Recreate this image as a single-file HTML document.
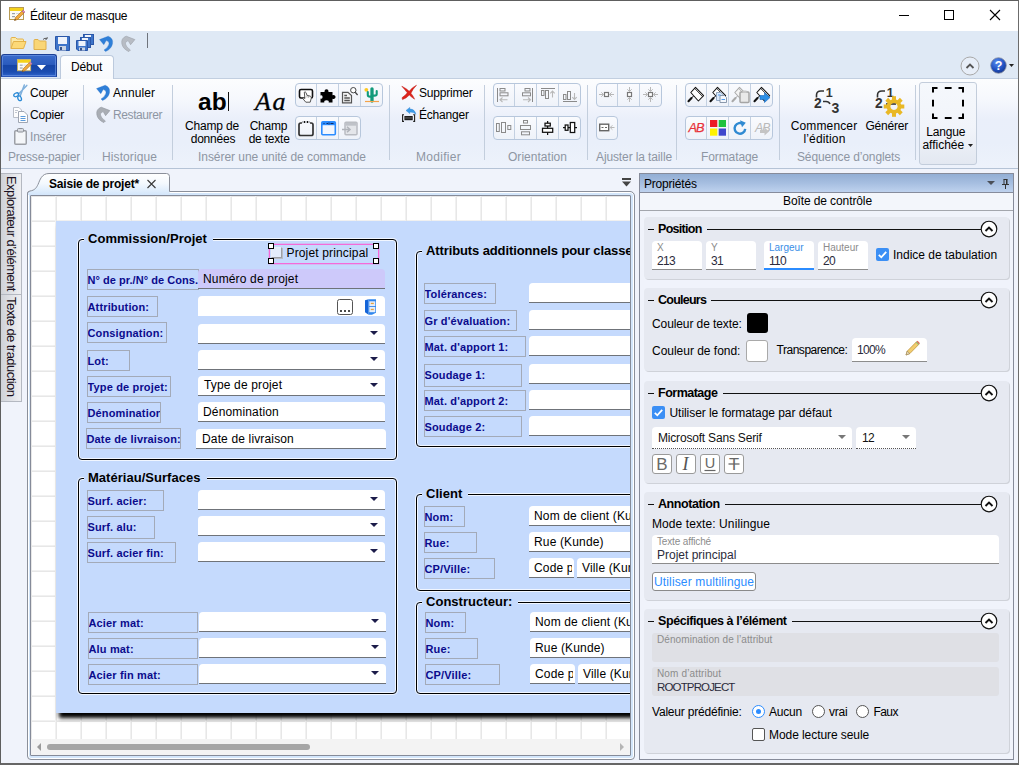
<!DOCTYPE html>
<html lang="fr">
<head>
<meta charset="utf-8">
<title>Éditeur de masque</title>
<style>
*{box-sizing:border-box;margin:0;padding:0}
html,body{width:1019px;height:765px;overflow:hidden;background:#fff}
body{font-family:"Liberation Sans",sans-serif;font-size:12px;color:#000;position:relative}
.a{position:absolute}
.t{position:absolute;white-space:nowrap;line-height:14px;font-size:12px;letter-spacing:-0.2px}
.g{color:#8e96a3}
svg{position:absolute;overflow:visible}
/* window */
#win{position:absolute;left:0;top:0;width:1019px;height:765px;background:#fff;overflow:hidden}
#frame{position:absolute;left:0;top:0;width:1019px;height:765px;border:1px solid #5e5e5e;border-right-color:#6c6c6c;border-bottom:2px solid #666;pointer-events:none}
#qat{left:1px;top:31px;width:1017px;height:24px;background:#dfe9f5}
#tabrow{left:1px;top:55px;width:1017px;height:24px;background:#dfe9f5;border-bottom:1px solid #c2cfe0}
#ribbon{left:1px;top:79px;width:1017px;height:90px;background:linear-gradient(#fcfdfe 0,#f6f8fd 22%,#eaeffa 45%,#e9effa 72%,#edf2fb 100%);border-bottom:1px solid #b5c3d6}
#main{left:1px;top:169px;width:1017px;height:595px;background:#f0f3fb}
.sep{position:absolute;top:6px;width:1px;height:75px;background:#c3cedd}
.grp{position:absolute;font-size:12px;line-height:14px;color:#9aa1ad;white-space:nowrap;top:72px}
/* ribbon small button groups */
.bg{position:absolute;height:24px;border:1px solid #bccadd;border-radius:3px;background:linear-gradient(#fbfcfe,#eef2f8);display:flex}
.bg i{display:block;width:22px;height:22px;border-right:1px solid #c6d2e2;position:relative;flex:none}
.bg i:last-child{border-right:0}

/* main area */
#side1,#side2{position:absolute;left:1px;width:21px;background:linear-gradient(90deg,#cfd2d8,#e9eaee 80%,#eeeff2);border:1px solid #b4b8c1;border-left:0}
.vt{position:absolute;white-space:nowrap;font-size:13px;line-height:14px;transform-origin:0 0;transform:rotate(90deg);letter-spacing:-0.55px;color:#1a1020}
#docframe{position:absolute;left:27px;top:191px;width:608px;height:569px;border:1px solid #8a8f9a;border-radius:3px 5px 4px 4px;background:#d3e6fb;box-shadow:inset 0 0 0 1px #fff}
#canvas{position:absolute;left:31px;top:196px;width:599px;height:543px;background-color:#fff;overflow:hidden;
 background-image:linear-gradient(90deg,#f1f1f1 1px,#e7e7e7 1px,#e7e7e7 2px,transparent 2px),linear-gradient(#f1f1f1 1px,#e7e7e7 1px,#e7e7e7 2px,transparent 2px);background-size:25px 25px;background-position:-1px -1px}
#form{position:absolute;left:25px;top:25px;width:900px;height:492px;background:#c5dafd;box-shadow:3px 5px 4px 0 #000}
.gb{position:absolute;border:1px solid #000;border-radius:4px;box-shadow:0 0 0 1px rgba(255,255,255,.75),inset 0 0 0 1px rgba(255,255,255,.75)}
.gt{position:absolute;font-weight:bold;font-size:13px;line-height:15px;white-space:nowrap;background:#c5dafd;padding:0 6px 0 4px;letter-spacing:.03px}
.lb{position:absolute;border:1px solid #a3aab8;font-weight:bold;font-size:11px;line-height:13px;color:#0b0b8c;white-space:nowrap;padding:5px 0 0 0;overflow:hidden;letter-spacing:.15px;text-indent:-.500px}
.fd{position:absolute;background:#fff;border-radius:4px 4px 0 0;border-bottom:1px solid #6f7379;font-size:12px;line-height:14px;white-space:nowrap;overflow:hidden;letter-spacing:.15px}
.fd.nb{border-bottom:0}
.fd.lav{background:#cdc9fa}
.dd{position:absolute;width:0;height:0;border-left:4px solid transparent;border-right:4px solid transparent;border-top:4px solid #1c1c4a}

/* properties panel */
#pp{position:absolute;left:639px;top:173px;width:375px;height:587px;border:1px solid #868b9a;background:#f0f3fb}
#pph{position:absolute;left:640px;top:174px;width:373px;height:19px;background:linear-gradient(#92aed4 0,#a6bee0 50%,#bed2ee 100%);border-bottom:1px solid #868c9c}
#pps{position:absolute;left:640px;top:193px;width:373px;height:18px;background:#f3f6fb;border-bottom:1px solid #a3a6ad}
.card{position:absolute;left:644px;width:365px;background:#e6e9f1;border-radius:4px;box-shadow:1px 1px 0 #cfd2d9}
.ct{position:absolute;left:658px;font-weight:bold;font-size:12.500px;line-height:14px;letter-spacing:-0.5px;white-space:nowrap}
.cl{position:absolute;height:1px;background:#111}
.pf{position:absolute;background:#fff;border-radius:4px 4px 0 0;border-bottom:1px solid #8c8c8c}
.pf.dis{background:#dfe0e5;border-bottom:0;border-radius:3px}
.sl{position:absolute;font-size:10px;line-height:12px;color:#8c8c8c;white-space:nowrap;letter-spacing:0}
.pv{position:absolute;font-size:12px;line-height:14px;color:#2b2b3b;white-space:nowrap;letter-spacing:-0.7px}
.cb{position:absolute;width:13px;height:13px;border-radius:2px;background:#3b8ff5}
.rd{position:absolute;width:13px;height:13px;border-radius:50%;border:1px solid #555;background:#fff}
.fb{position:absolute;top:454px;width:20px;height:20px;border:1px solid #9a9a9a;border-radius:3px;background:#fff}
</style>
</head>
<body>
<div id="win">
<!-- TITLE BAR -->
<div class="a" id="title" style="left:1px;top:1px;width:1017px;height:30px;background:#fff">
  <!-- app icon -->
  <svg style="left:8px;top:6px" width="17" height="16" viewBox="0 0 17 16">
    <rect x="0.5" y="0.5" width="14" height="12" fill="#fbfaf3" stroke="#b79b55"/>
    <rect x="1" y="1" width="13" height="3" fill="#f5d21b"/>
    <rect x="3" y="6" width="3" height="1.2" fill="#9aa0a8"/><rect x="3" y="9" width="3" height="1.2" fill="#9aa0a8"/>
    <rect x="7" y="6" width="5" height="1" fill="#d4d6da"/>
    <path d="M5.5 13.5 L6.5 10.5 L13 4 L15 6 L8.5 12.5 Z" fill="#f0a93c" stroke="#a8661a" stroke-width=".6"/>
    <path d="M13 4 L14 3 L16 5 L15 6Z" fill="#e59ac0" stroke="#a05080" stroke-width=".5"/>
    <path d="M5.5 13.5 L6 12 L7 13Z" fill="#333"/>
  </svg>
  <div class="t" id="ttl" style="left:29px;top:8px">Éditeur de masque</div>
  <!-- window controls -->
  <div class="a" style="left:898px;top:14px;width:10px;height:1px;background:#000"></div>
  <div class="a" style="left:943px;top:9px;width:10px;height:10px;border:1px solid #000"></div>
  <svg style="left:989px;top:9px" width="10" height="10" viewBox="0 0 10 10"><path d="M0 0L10 10M10 0L0 10" stroke="#000" stroke-width="1.1" fill="none"/></svg>
</div>
<!-- QAT -->
<div class="a" id="qat">
  <!-- open folder -->
  <svg style="left:9px;top:5px" width="17" height="14" viewBox="0 0 17 14">
    <path d="M1 12.5V2.5Q1 1.5 2 1.5H5.5L7 3H12.5Q13.5 3 13.5 4V5" fill="#fbe9a8" stroke="#e3b24a"/>
    <path d="M1 12.5L3.5 5.5H16L13.5 12.5Z" fill="#fcd978" stroke="#e3b24a"/>
  </svg>
  <!-- folder up -->
  <svg style="left:32px;top:5px" width="16" height="15" viewBox="0 0 16 15">
    <path d="M1 13.5V4.5Q1 3.5 2 3.5H5L6.5 5H12.5Q13 5 13 5.5V13.5Z" fill="#f9d676" stroke="#e0b04a"/>
    <path d="M10 3.5Q12 1 14 3M14 3L14.2 1M14 3L12 3" stroke="#555" stroke-width=".9" fill="none"/>
  </svg>
  <!-- save -->
  <svg style="left:54px;top:5px" width="15" height="15" viewBox="0 0 15 15">
    <path d="M.5 .5H14.5V14.5H2L.5 13Z" fill="#3d74c9" stroke="#2a57a8"/>
    <rect x="3" y="1" width="9" height="7" fill="#eef3fb"/>
    <rect x="4" y="10" width="7" height="4.5" fill="#c9d3e3"/><rect x="5" y="11" width="2" height="3" fill="#33528a"/>
  </svg>
  <!-- save all -->
  <svg style="left:75px;top:3px" width="18" height="17" viewBox="0 0 18 17">
    <rect x="7.5" y=".5" width="10" height="10" fill="#3d74c9" stroke="#2a57a8"/><rect x="9" y="1" width="6" height="4" fill="#eef3fb"/>
    <rect x="4.500" y="3.500" width="10" height="10" fill="#3d74c9" stroke="#2a57a8"/><rect x="6" y="4" width="6" height="4" fill="#eef3fb"/>
    <path d="M.5 6.500H11.500V16.500H2L.5 15Z" fill="#3d74c9" stroke="#2a57a8"/><rect x="2.500" y="7" width="7" height="5" fill="#eef3fb"/>
    <rect x="3" y="13.500" width="6" height="3" fill="#c9d3e3"/><rect x="4" y="14" width="2" height="2.500" fill="#33528a"/>
  </svg>
  <!-- undo -->
  <svg style="left:98px;top:4px" width="15" height="16" viewBox="0 0 15 16">
    <path d="M.500 4.600L9.200 1.200Q14.600 3.200 13.500 8.800Q12.600 13.800 6.600 16.600L5 15Q9.400 12.200 10 8.900Q10.400 6.400 7.200 5.600L4.800 9.700Z" fill="#2e7fd8" stroke="#1f66bd" stroke-width=".3"/>
  </svg>
  <!-- redo (disabled) -->
  <svg style="left:120px;top:4px" width="15" height="16" viewBox="0 0 15 16">
    <path d="M13.9 4.6L5.2 1.2Q-0.2 3.2 0.9 8.8Q1.8 13.8 7.8 16.6L9.4 15Q5 12.2 4.4 8.9Q4 6.4 7.2 5.6L9.6 9.7Z" fill="#b7bcc4" stroke="#9a9fa8" stroke-width=".6"/>
  </svg>
  <div class="a" style="left:146px;top:2px;width:1px;height:15px;background:#6f747c"></div>
</div>
<!-- TAB ROW -->
<div class="a" id="tabrow">
  <div class="a" style="left:0;top:-1px;width:56px;height:23px;border:1px solid #1b3f95;border-bottom-color:#2a56b8;border-radius:3px 3px 0 0;background:linear-gradient(#3a6bcb 0,#2a5bbd 45%,#1645a6 50%,#1a4cb0 80%,#2d63c9 100%);box-shadow:inset 0 0 0 1px rgba(120,160,235,.55)"></div>
  <svg style="left:16px;top:4px" width="16" height="15" viewBox="0 0 17 16">
    <rect x="0.5" y="0.5" width="14" height="12" fill="#fbfaf3" stroke="#c9b368"/>
    <rect x="1" y="1" width="13" height="3" fill="#f5d21b"/>
    <rect x="3" y="6" width="3" height="1.200" fill="#9aa0a8"/><rect x="3" y="9" width="3" height="1.200" fill="#9aa0a8"/>
    <rect x="7" y="6" width="5" height="1" fill="#d4d6da"/>
    <path d="M5.500 13.500 L6.500 10.500 L13 4 L15 6 L8.500 12.500 Z" fill="#f0a93c" stroke="#a8661a" stroke-width=".6"/>
    <path d="M13 4 L14 3 L16 5 L15 6Z" fill="#e59ac0" stroke="#a05080" stroke-width=".5"/>
    <path d="M5.500 13.500 L6 12 L7 13Z" fill="#333"/>
  </svg>
  <svg style="left:36px;top:10px" width="9" height="5" viewBox="0 0 9 5"><path d="M0 0H9L4.500 5Z" fill="#fff"/></svg>
  <div class="a" style="left:59px;top:0;width:54px;height:24px;border:1px solid #bccadd;border-bottom:0;border-radius:4px 4px 0 0;background:linear-gradient(#fdfeff,#f7f9fc)"></div>
  <div class="t" id="debut" style="left:70px;top:5px">Début</div>
  <!-- collapse circle -->
  <svg style="left:958.500px;top:1px" width="20" height="20" viewBox="0 0 20 20"><circle cx="10" cy="10" r="9" fill="#e7eef8" stroke="#a9a9a9" stroke-width="1"/><path d="M6.500 12L10 8.500L13.500 12" stroke="#555" stroke-width="1.800" fill="none"/></svg>
  <!-- help -->
  <svg style="left:988.500px;top:2px" width="17" height="17" viewBox="0 0 17 17">
    <defs><radialGradient id="hg" cx=".4" cy=".3" r=".8"><stop offset="0" stop-color="#5a8ff0"/><stop offset=".6" stop-color="#1f4fc0"/><stop offset="1" stop-color="#12307f"/></radialGradient></defs>
    <circle cx="8.500" cy="8.500" r="7.800" fill="url(#hg)" stroke="#8a8fa0" stroke-width=".8"/>
    <text x="8.500" y="13" text-anchor="middle" font-family="Liberation Sans,sans-serif" font-weight="bold" font-size="12.500" fill="#fff">?</text>
  </svg>
  <svg style="left:1008px;top:9px" width="5" height="3" viewBox="0 0 5 3"><path d="M0 0H5L2.500 3Z" fill="#222"/></svg>
</div>
<!-- RIBBON -->
<div class="a" id="ribbon">
<svg style="left:11px;top:5px" width="16" height="17" viewBox="0 0 16 17">
 <path d="M14.800 1.400L6.300 10.200M12.300 1L8.200 12" stroke="#7fb0dc" stroke-width="1.500" fill="none" stroke-linecap="round"/>
 <ellipse cx="4.200" cy="10.800" rx="2.600" ry="1.700" transform="rotate(-28 4.200 10.800)" fill="none" stroke="#2b8ad6" stroke-width="1.300"/>
 <ellipse cx="7.600" cy="14.300" rx="1.700" ry="2.500" transform="rotate(-22 7.600 14.300)" fill="none" stroke="#2b8ad6" stroke-width="1.300"/>
</svg>
<div class="t " id="r_couper" style="left:29px;top:7px;">Couper</div>
<svg style="left:12px;top:28px" width="15" height="16" viewBox="0 0 15 16">
 <path d="M.500 .500H6L8.500 3V10.500H.500Z" fill="#fdfdfe" stroke="#b9bec8"/>
 <path d="M5.500 4.500H11L14.500 8V15.500H5.500Z" fill="#fdfdfe" stroke="#9fa6b3"/>
 <path d="M7.500 9.500H12.500M7.500 11.500H12.500M7.500 13.500H12.500" stroke="#5b9bdc" stroke-width="1"/>
 <path d="M2 3.500H5M2 5.500H4" stroke="#c2c7d0" stroke-width="1"/>
</svg>
<div class="t " id="r_copier" style="left:29px;top:29px;">Copier</div>
<svg style="left:13px;top:49px" width="13" height="17" viewBox="0 0 13 17">
 <rect x=".750" y="2.750" width="11.500" height="13.500" rx="1" fill="#f4f6f9" stroke="#9c9fa6" stroke-width="1.500"/>
 <rect x="3.500" y=".500" width="6" height="3.500" rx="1" fill="#d9dce2" stroke="#8c9098"/>
</svg>
<div class="t g" id="r_inserer" style="left:29px;top:51px;">Insérer</div>
<div class="t g" id="g_presse" style="left:7px;top:71px;">Presse-papier</div>
<div class="sep" style="left:82px"></div>
<svg style="left:95px;top:5px" width="15" height="17" viewBox="0 0 15 17">
 <path d="M.500 4.600L9.200 1.200Q14.600 3.200 13.500 8.800Q12.600 13.800 6.600 16.600L5 15Q9.400 12.200 10 8.900Q10.400 6.400 7.200 5.600L4.800 9.700Z" fill="#2e7fd8" stroke="#1f66bd" stroke-width=".3"/>
</svg>
<div class="t " id="r_annuler" style="letter-spacing:0.1px;left:112px;top:7px;">Annuler</div>
<svg style="left:95px;top:27px" width="15" height="17" viewBox="0 0 15 17">
 <path d="M13.9 4.6L5.2 1.2Q-0.2 3.2 0.9 8.8Q1.8 13.8 7.8 16.6L9.4 15Q5 12.2 4.4 8.9Q4 6.4 7.2 5.6L9.6 9.7Z" fill="#a9adb4" stroke="#8f949c" stroke-width=".6"/>
</svg>
<div class="t g" id="r_restaurer" style="letter-spacing:-0.4px;left:112px;top:29px;">Restaurer</div>
<div class="t g" id="g_hist" style="letter-spacing:0.1px;left:101px;top:71px;">Historique</div>
<div class="sep" style="left:171px"></div>
<div class="t" id="r_abl" style="left:197px;top:10.700px;font-size:24.500px;line-height:23px;font-weight:bold;letter-spacing:0">ab</div>
<div class="a" style="left:227px;top:13px;width:1px;height:18.500px;background:#111"></div>
<div class="t " id="r_champde" style="left:151.0px;width:120px;text-align:center;top:40px;">Champ de</div>
<div class="t " id="r_donnees" style="left:152.0px;width:120px;text-align:center;top:53px;">données</div>
<div class="t" id="r_aa" style="left:254px;top:11px;font-family:'Liberation Serif',serif;font-style:italic;font-size:26px;line-height:24px;letter-spacing:1.500px;-webkit-text-stroke:.35px #111">Aa</div>
<div class="t " id="r_champ" style="left:207.5px;width:120px;text-align:center;top:40px;">Champ</div>
<div class="t " id="r_detexte" style="left:208.2px;width:120px;text-align:center;top:53px;">de texte</div>
<div class="t g" id="g_inserer" style="letter-spacing:-0.05px;left:197px;top:71px;">Insérer une unité de commande</div>
<div class="sep" style="left:388px"></div>
<svg style="left:400px;top:6px" width="16" height="15" viewBox="0 0 16 15">
 <path d="M.800 1.200Q5.500 3.500 8.200 6.300Q11.500 2 15.500 .200Q11.500 4.300 9.900 8.200Q12.300 11 13.600 14.200Q10.300 12 8.300 10Q5.800 13 1.500 14.600Q1 13.500 1.200 12.500Q4.500 10.500 6.300 7.800Q3.800 4.500 .800 1.200Z" fill="#dc241c" stroke="#c21810" stroke-width=".5"/>
</svg>
<div class="t " id="r_suppr" style="left:418px;top:7px;">Supprimer</div>
<svg style="left:401px;top:28px" width="15" height="16" viewBox="0 0 15 16">
 <path d="M4 3.500L7.800 .400V2.100Q12.800 2 13.900 7.300Q11.500 4.900 7.800 5V6.600Z" fill="#3b9be8" stroke="#2b7fd0" stroke-width=".4"/>
 <rect x="2.400" y="9" width="8.300" height="4.200" fill="#1e1e1e"/><rect x="3.200" y="10.300" width="6.700" height="1.300" fill="#555"/>
 <path d="M2 7.800H.600V14.400H2M11.200 7.800H12.600V14.400H11.200" stroke="#1e1e1e" stroke-width="1.100" fill="none"/>
</svg>
<div class="t " id="r_echanger" style="left:418px;top:29px;">Échanger</div>
<div class="t g" id="g_modifier" style="letter-spacing:0.29px;left:415px;top:71px;">Modifier</div>
<div class="sep" style="left:483px"></div>
<div class="t g" id="g_orient" style="letter-spacing:0.03px;left:507px;top:71px;">Orientation</div>
<div class="sep" style="left:586px"></div>
<div class="t g" id="g_ajuster" style="letter-spacing:-0.12px;left:595px;top:71px;">Ajuster la taille</div>
<div class="sep" style="left:675px"></div>
<div class="t g" id="g_format" style="letter-spacing:-0.1px;left:700px;top:71px;">Formatage</div>
<div class="sep" style="left:778px"></div>
<svg style="left:812px;top:8px" width="28" height="28" viewBox="0 0 28 28">
 <text x="12.700" y="9.700" font-family="Liberation Sans,sans-serif" font-weight="bold" font-size="12.500" fill="#333">1</text>
 <text x="1" y="20.700" font-family="Liberation Sans,sans-serif" font-weight="bold" font-size="13.800" fill="#333">2</text>
 <text x="18.500" y="25.900" font-family="Liberation Sans,sans-serif" font-weight="bold" font-size="14" fill="#333">3</text>
 <path d="M3.500 10.500V8Q3.500 4 8 4H11" stroke="#333" stroke-width="1.600" fill="none"/>
 <path d="M10 14.500H13Q16 14.500 17 17" stroke="#333" stroke-width="1.600" fill="none"/>
</svg>
<div class="t " id="r_commencer" style="letter-spacing:0.13px;left:763.0px;width:120px;text-align:center;top:39.5px;">Commencer</div>
<div class="t " id="r_ledition" style="letter-spacing:0.15px;left:763.5px;width:120px;text-align:center;top:52.5px;">l’édition</div>
<svg style="left:873px;top:8px" width="32" height="32" viewBox="0 0 32 32">
 <text x="12.700" y="9.700" font-family="Liberation Sans,sans-serif" font-weight="bold" font-size="12.500" fill="#333">1</text>
 <text x="1" y="20.700" font-family="Liberation Sans,sans-serif" font-weight="bold" font-size="13.800" fill="#333">2</text>
 <path d="M3.500 10.500V8Q3.500 4 8 4H11" stroke="#333" stroke-width="1.600" fill="none"/>
 <path d="M12 17H22" stroke="#333" stroke-width="1.600"/>
 <g transform="translate(20 19.500)" fill="#e9b825">
  <path d="M0 -7.300A7.300 7.300 0 1 0 .01 -7.300ZM0 -3.600A3.600 3.600 0 1 1 -.01 -3.600Z" fill-rule="evenodd"/>
  <rect x="-2" y="-10.300" width="4" height="4"/>
  <rect x="-2" y="-10.300" width="4" height="4" transform="rotate(45)"/><rect x="-2" y="-10.300" width="4" height="4" transform="rotate(90)"/>
  <rect x="-2" y="-10.300" width="4" height="4" transform="rotate(135)"/><rect x="-2" y="-10.300" width="4" height="4" transform="rotate(180)"/>
  <rect x="-2" y="-10.300" width="4" height="4" transform="rotate(225)"/><rect x="-2" y="-10.300" width="4" height="4" transform="rotate(270)"/>
  <rect x="-2" y="-10.300" width="4" height="4" transform="rotate(315)"/>
 </g>
</svg>
<div class="t " id="r_generer" style="left:825.8px;width:120px;text-align:center;top:39.5px;">Générer</div>
<div class="t g" id="g_seq" style="letter-spacing:-0.13px;left:796px;top:71px;">Séquence d’onglets</div>
<div class="sep" style="left:914px"></div>
<div class="a" style="left:918px;top:3px;width:58px;height:83px;border:1px solid #c3cddb;border-radius:3px;background:linear-gradient(#f5f8fc 0,#f1f4fa 55%,#e3e8f1 100%)"></div>
<svg style="left:931px;top:8px" width="32" height="32" viewBox="0 0 32 32">
 <path d="M1 5.500V1H5.500M12.800 1H19.600M26.500 1H31V5.500M31 12.800V19.600M31 26.500V31H26.500M19.600 31H12.800M5.500 31H1V26.500M1 19.600V12.800" stroke="#000" stroke-width="2" fill="none"/>
</svg>
<div class="t " id="r_langue" style="left:884.7px;width:120px;text-align:center;top:45.5px;">Langue</div>
<div class="t " id="r_affichee" style="letter-spacing:0px;left:882.3px;width:120px;text-align:center;top:58.5px;">affichée</div>
<svg style="left:967px;top:65px" width="5" height="3" viewBox="0 0 5 3"><path d="M0 0H5L2.500 3Z" fill="#222"/></svg>
<svg width="0" height="0" style="left:0;top:0"><defs><linearGradient id="bgg" x1="0" y1="0" x2="0" y2="1"><stop offset="0" stop-color="#fafbfe"/><stop offset="1" stop-color="#eef2f9"/></linearGradient></defs></svg>
<svg style="left:294px;top:4px" width="88" height="24" viewBox="0 0 88 24"><rect x=".500" y=".500" width="87" height="23" rx="3.500" fill="url(#bgg)" stroke="#b7c7dc"/><path d="M21.5 1V23" stroke="#c3d0e1"/><path d="M43.5 1V23" stroke="#c3d0e1"/><path d="M65.5 1V23" stroke="#c3d0e1"/>
<rect x="4.500" y="6.500" width="13" height="8.500" rx="1.500" fill="#fff" stroke="#111" stroke-width="1.600"/>
<path d="M9.300 9.200Q10.300 8.400 11 9.600L12 12.300L15.300 13.200Q16.700 13.800 16.200 15.500L15.200 19.200H10.800L8 15.800Q7.600 14.600 8.800 14.700L9.900 15.500Z" fill="#fff" stroke="#444" stroke-width=".9"/><path d="M12 12.300V14.500M13.600 12.900V14.800" stroke="#777" stroke-width=".6"/>
<path transform="translate(-1 0)" d="M30.500 8.200A2 2 0 1 1 34.500 8.200L34.400 9H38.500V12.300A2 2 0 1 1 38.500 15.700V19.500H34.700Q35.300 17.300 32.500 17.300Q29.800 17.300 30.300 19.500H26.500V15.500Q28.600 16.200 28.600 14Q28.600 11.800 26.500 12.500V9H30.600Z" fill="#000"/>
<path d="M47.500 9.300H53L56.500 12.500V19.800H47.500Z" fill="#f2f2f2" stroke="#555" stroke-width="1.200"/>
<path d="M49.300 12.500H52M49.300 15H54.800M49.300 17.500H54.800" stroke="#555" stroke-width="1.300"/>
<circle cx="58.300" cy="7.200" r="2.700" fill="#fff" stroke="#444" stroke-width="1"/><path d="M60.200 9.300L62.600 12" stroke="#444" stroke-width="1.300"/>
<circle cx="71.300" cy="6.800" r="1.900" fill="#fdc822"/>
<path d="M77 5.800V18" stroke="#119a7a" stroke-width="3.300" fill="none" stroke-linecap="round"/><path d="M72.800 9V12Q72.800 13.600 75 13.600H77M81.700 8V11Q81.700 12.600 79.500 12.600H77" stroke="#119a7a" stroke-width="2.100" fill="none" stroke-linecap="round"/>
<path d="M70 18.500H84" stroke="#f3a34a" stroke-width="1.200"/></svg>
<svg style="left:294px;top:37px" width="66" height="24" viewBox="0 0 66 24"><rect x=".500" y=".500" width="65" height="23" rx="3.500" fill="url(#bgg)" stroke="#b7c7dc"/><path d="M21.5 1V23" stroke="#c3d0e1"/><path d="M43.5 1V23" stroke="#c3d0e1"/>
<rect x="4" y="7" width="14" height="12.500" rx="1.800" fill="none" stroke="#333" stroke-width="1.700"/>
<rect x="7" y="5" width="8" height="3" fill="#f1f4fa"/><path d="M7.500 6H8.500M9.500 5V7M10.500 6H11.500M12.500 5V7M13.500 6H14.500" stroke="#111" stroke-width="1"/>
<rect x="26.800" y="5.800" width="13.500" height="13" rx="1" fill="#f2f6fd" stroke="#2b8cff" stroke-width="1.600"/>
<rect x="27" y="6" width="13" height="3.200" fill="#2b8cff"/><path d="M28.500 7.500H29.500M31.500 7.500H33M34 6.500V8.500M35.500 7.500H38.500" stroke="#0b2a66" stroke-width="1"/>
<rect x="50" y="6.200" width="12" height="12.500" rx="1" fill="#e4e6ea" stroke="#b9bcc2" stroke-width="1.500"/>
<rect x="50.500" y="6.700" width="11" height="3" fill="#bfc2c8"/>
<path d="M47 13.500H54.500M52 10.800L55 13.500L52 16.200" stroke="#b0b3b9" stroke-width="1.500" fill="none"/></svg>
<svg style="left:492px;top:4px" width="88" height="24" viewBox="0 0 88 24"><rect x=".500" y=".500" width="87" height="23" rx="3.500" fill="url(#bgg)" stroke="#b7c7dc"/><path d="M21.5 1V23" stroke="#c3d0e1"/><path d="M43.5 1V23" stroke="#c3d0e1"/><path d="M65.5 1V23" stroke="#c3d0e1"/>
<path d="M4.500 5V19" stroke="#8a8a8a" stroke-width="1"/>
<rect x="7" y="5.500" width="5" height="2.500" fill="none" stroke="#8a8a8a"/><rect x="7" y="9.800" width="8" height="3" fill="none" stroke="#8a8a8a"/>
<path d="M14.500 16.800H7M9.500 14.500L7 16.800L9.500 19" stroke="#b8b8b8" stroke-width="1.100" fill="none"/>
<path d="M39.500 5V19" stroke="#8a8a8a" stroke-width="1"/>
<rect x="32" y="5.500" width="5" height="2.500" fill="none" stroke="#8a8a8a"/><rect x="29.500" y="9.800" width="8" height="3" fill="none" stroke="#8a8a8a"/>
<path d="M30 16.800H37.500M35 14.500L37.500 16.800L35 19" stroke="#b8b8b8" stroke-width="1.100" fill="none"/>
<path d="M48 5.500H62" stroke="#8a8a8a" stroke-width="1"/>
<rect x="48.500" y="7.500" width="2.500" height="5" fill="none" stroke="#8a8a8a"/><rect x="52.500" y="7.500" width="3" height="8" fill="none" stroke="#8a8a8a"/>
<path d="M59.500 14.500V8M57.300 10.300L59.500 8L61.700 10.300" stroke="#b8b8b8" stroke-width="1.100" fill="none"/>
<path d="M70 18.500H84" stroke="#8a8a8a" stroke-width="1"/>
<rect x="70.500" y="11.500" width="2.500" height="5" fill="none" stroke="#8a8a8a"/><rect x="74.500" y="8.500" width="3" height="8" fill="none" stroke="#8a8a8a"/>
<path d="M81.500 10V16.500M79.300 14.200L81.500 16.500L83.700 14.200" stroke="#b8b8b8" stroke-width="1.100" fill="none"/></svg>
<svg style="left:492px;top:37px" width="88" height="24" viewBox="0 0 88 24"><rect x=".500" y=".500" width="87" height="23" rx="3.500" fill="url(#bgg)" stroke="#b7c7dc"/><path d="M21.5 1V23" stroke="#c3d0e1"/><path d="M43.5 1V23" stroke="#c3d0e1"/><path d="M65.5 1V23" stroke="#c3d0e1"/>
<rect x="3.500" y="7.500" width="2.800" height="8" fill="none" stroke="#8a8a8a"/><rect x="8.500" y="6.500" width="4" height="10" fill="none" stroke="#8a8a8a"/><rect x="14.800" y="9.500" width="3" height="4" fill="none" stroke="#8a8a8a"/>
<rect x="30.500" y="4.500" width="4" height="2.500" fill="none" stroke="#8a8a8a"/><rect x="27.500" y="9.500" width="10" height="4" fill="none" stroke="#8a8a8a"/><rect x="28.500" y="15.800" width="8" height="3" fill="none" stroke="#8a8a8a"/>
<path d="M54.600 5V19" stroke="#111" stroke-width="1.250"/>
<rect x="52" y="7.200" width="5.300" height="2.800" fill="#fff" stroke="#111" stroke-width="1.250"/><rect x="49.500" y="12.300" width="10.200" height="4" fill="#fff" stroke="#111" stroke-width="1.250"/>
<path d="M70 11.600H84" stroke="#111" stroke-width="1.250"/>
<rect x="72.200" y="9" width="2.800" height="5.300" fill="#fff" stroke="#111" stroke-width="1.250"/><rect x="77.300" y="6.500" width="4.400" height="10" fill="#fff" stroke="#111" stroke-width="1.250"/></svg>
<svg style="left:595px;top:4px" width="66" height="24" viewBox="0 0 66 24"><rect x=".500" y=".500" width="65" height="23" rx="3.500" fill="url(#bgg)" stroke="#b7c7dc"/><path d="M21.5 1V23" stroke="#c3d0e1"/><path d="M43.5 1V23" stroke="#c3d0e1"/><rect x="8.500" y="9.500" width="4" height="4" fill="#fff" stroke="#777" stroke-width="1.200"/><path d="M3 11.5L7.5 11.5M5.3 13.7L7.5 11.5L5.3 9.3" stroke="#b8b8b8" stroke-width="1" fill="none"/><path d="M18 11.5L13.5 11.5M15.7 9.3L13.5 11.5L15.7 13.7" stroke="#b8b8b8" stroke-width="1" fill="none"/><rect x="31.500" y="9.500" width="4" height="4" fill="#fff" stroke="#777" stroke-width="1.200"/><path d="M33.5 4L33.5 8.5M31.3 6.3L33.5 8.5L35.7 6.3" stroke="#b8b8b8" stroke-width="1" fill="none"/><path d="M33.5 19L33.5 14.5M35.7 16.7L33.5 14.5L31.3 16.7" stroke="#b8b8b8" stroke-width="1" fill="none"/><rect x="52.500" y="9.500" width="4" height="4" fill="#fff" stroke="#777" stroke-width="1.200"/><path d="M47 11.5L51.5 11.5M49.3 13.7L51.5 11.5L49.3 9.3" stroke="#b8b8b8" stroke-width="1" fill="none"/><path d="M62 11.5L57.5 11.5M59.7 9.3L57.5 11.5L59.7 13.7" stroke="#b8b8b8" stroke-width="1" fill="none"/><path d="M54.5 4L54.5 8.5M52.3 6.3L54.5 8.5L56.7 6.3" stroke="#b8b8b8" stroke-width="1" fill="none"/><path d="M54.5 19L54.5 14.5M56.7 16.7L54.5 14.5L52.3 16.7" stroke="#b8b8b8" stroke-width="1" fill="none"/></svg>
<svg style="left:595px;top:37px" width="22" height="24" viewBox="0 0 22 24"><rect x=".500" y=".500" width="21" height="23" rx="3.500" fill="url(#bgg)" stroke="#b7c7dc"/><rect x="3.700" y="8.200" width="9" height="6.500" fill="#fff" stroke="#666" stroke-width="1.400"/><path d="M5.500 11.500H7.500M9 11.500H11" stroke="#666" stroke-width="1.200"/><path d="M18.5 11.5L14.2 11.5M16.4 9.3L14.2 11.5L16.4 13.7" stroke="#b8b8b8" stroke-width="1" fill="none"/></svg>
<svg style="left:684px;top:4px" width="88" height="24" viewBox="0 0 88 24"><rect x=".500" y=".500" width="87" height="23" rx="3.500" fill="url(#bgg)" stroke="#b7c7dc"/><path d="M21.5 1V23" stroke="#c3d0e1"/><path d="M43.5 1V23" stroke="#c3d0e1"/><path d="M65.5 1V23" stroke="#c3d0e1"/><g transform="translate(0 0)"><path d="M10.500 4.300L18.600 12.700L13.400 18L5.800 9.500Z" fill="#fff" stroke="#111" stroke-width="1.050" stroke-linejoin="round"/><path d="M9.500 5.300L17.500 13.600" stroke="#111" stroke-width=".8"/><path d="M8.500 13L6 15.500" stroke="#111" stroke-width="1"/><path d="M6.500 15L3.500 18.200" stroke="#111" stroke-width="2.100" stroke-linecap="round"/></g><g transform="translate(22 0)"><path d="M10.500 4.300L18.600 12.700L13.400 18L5.800 9.500Z" fill="#fff" stroke="#111" stroke-width="1.050" stroke-linejoin="round"/><path d="M9.500 5.300L17.500 13.600" stroke="#111" stroke-width=".8"/><path d="M8.500 13L6 15.500" stroke="#111" stroke-width="1"/><path d="M6.500 15L3.500 18.200" stroke="#111" stroke-width="2.100" stroke-linecap="round"/></g><path d="M31.500 9.500H36L38.500 12V17.500H31.500Z" fill="#dbe9fb" stroke="#8aa0bd" stroke-width=".9"/><path d="M35 12.500H39.500L41.500 14.500V19.500H35Z" fill="#f4f8fe" stroke="#7f8ea3" stroke-width=".9"/><path d="M33 12H35.500M36.500 16.500H40" stroke="#4f9af0" stroke-width="1"/><g transform="translate(44 0)"><path d="M10.500 4.300L18.600 12.700L13.400 18L5.800 9.500Z" fill="#f4f4f4" stroke="#a9a9a9" stroke-width="1.050" stroke-linejoin="round"/><path d="M9.500 5.300L17.500 13.600" stroke="#a9a9a9" stroke-width=".8"/><path d="M8.500 13L6 15.500" stroke="#a9a9a9" stroke-width="1"/><path d="M6.500 15L3.500 18.200" stroke="#a9a9a9" stroke-width="2.100" stroke-linecap="round"/></g><rect x="55" y="9" width="9" height="10.500" rx="1" fill="#e9e9e9" stroke="#a5a5a5" stroke-width="1.500"/><rect x="57.500" y="7.500" width="4" height="2.500" fill="#c9c9c9"/><g transform="translate(66 0)"><path d="M10.500 4.300L18.600 12.700L13.400 18L5.800 9.500Z" fill="#fff" stroke="#111" stroke-width="1.050" stroke-linejoin="round"/><path d="M9.500 5.300L17.500 13.600" stroke="#111" stroke-width=".8"/><path d="M8.500 13L6 15.500" stroke="#111" stroke-width="1"/><path d="M6.500 15L3.500 18.200" stroke="#111" stroke-width="2.100" stroke-linecap="round"/></g><path d="M75 12.500H79.500V9.500L85 14.500L79.500 19.500V16.500H75Z" fill="#2b8fe6" stroke="#1668c0" stroke-width=".6"/></svg>
<svg style="left:684px;top:37px" width="88" height="24" viewBox="0 0 88 24"><rect x=".500" y=".500" width="87" height="23" rx="3.500" fill="url(#bgg)" stroke="#b7c7dc"/><path d="M21.5 1V23" stroke="#c3d0e1"/><path d="M43.5 1V23" stroke="#c3d0e1"/><path d="M65.5 1V23" stroke="#c3d0e1"/>
<text x="3.600" y="16.300" font-family="Liberation Sans,sans-serif" font-style="italic" font-size="12.800" fill="#e8313a" letter-spacing="-1.1" stroke="#e8313a" stroke-width=".25">AB</text>
<rect x="25" y="4" width="7.300" height="7" fill="#ed1c24"/><rect x="33.700" y="4" width="7.300" height="7" fill="#1fc23e"/>
<rect x="25" y="12.500" width="7.300" height="7.200" fill="#fff200"/><rect x="33.700" y="12.500" width="7.300" height="7.200" fill="#3f48cc"/>
<path d="M58.300 8.300A5.300 5.300 0 1 0 60.200 12.800" stroke="#2f8ad2" stroke-width="2.400" fill="none"/>
<path d="M55 4.200L60.800 6.800L57 11.200Z" fill="#2f8ad2"/>
<text x="70" y="16" font-family="Liberation Sans,sans-serif" font-style="italic" font-size="12.500" fill="#b9b9b9" letter-spacing="-1.1">AB</text>
<path d="M75 14H79.500V11.500L84 15.500L79.500 19.500V17H75Z" fill="#c4c4c4"/></svg>
</div>
<!-- MAIN -->
<div class="a" id="main"></div>
<!-- left sidebar tabs -->
<div id="side1" style="top:173px;height:122px"></div>
<div class="vt" id="vt1" style="left:18px;top:176px">Explorateur d’élément</div>
<div id="side2" style="top:294px;height:108px"></div>
<div class="vt" id="vt2" style="left:18px;top:297px">Texte de traduction</div>
<!-- document tab -->
<svg style="left:622px;top:178px" width="9" height="9" viewBox="0 0 9 9"><rect x="0" y="0" width="9" height="2" fill="#444"/><path d="M0 3.500H9L4.500 8.500Z" fill="#444"/></svg>
<div id="docframe"><div class="a" style="left:2px;top:3px;width:601px;height:561px;border:1px solid #858b99;border-radius:1px"></div></div>
<svg style="left:27px;top:173px" width="146" height="22" viewBox="0 0 146 22">
 <defs><linearGradient id="tbg" x1="0" y1="0" x2="0" y2="1"><stop offset="0" stop-color="#ffffff"/><stop offset=".45" stop-color="#f4f9fe"/><stop offset="1" stop-color="#d3e6fb"/></linearGradient></defs>
 <path d="M1 22V20.500Q1 18.300 3 18C8 17.300 9.500 14.500 11 11.500C13 7 14.500 .500 22 .500H139.500Q142.500 .500 142.500 3.500V20H146V22Z" fill="url(#tbg)"/>
 <path d="M142.500 19.500H146V22H142.500Z" fill="#d3e6fb"/><path d="M143 19.500H146" stroke="#fff"/>
 <path d="M.500 22V20.500Q.500 18.300 3 18C8 17.300 9.500 14.500 11 11.500C13 7 14.500 .500 22 .500H139.500Q142.500 .500 142.500 3.500V18.500" fill="none" stroke="#8a8f9a"/>
</svg>
<div class="t" id="doctab" style="left:49px;top:176.500px;font-weight:bold;letter-spacing:-0.2px">Saisie de projet*</div>
<svg style="left:147px;top:180px" width="9" height="8" viewBox="0 0 9 8"><path d="M.500 0L8.500 8M8.500 0L.500 8" stroke="#3a3a3a" stroke-width="1.100"/></svg>
<div id="canvas">
<div id="form">
<div class="gb" style="left:22px;top:18px;width:319px;height:221px"></div><div class="gt" style="left:28px;top:10px">Commission/Projet</div>
<div class="a" style="left:213px;top:23px;width:110px;height:20px;border:1px solid #f56ad9;box-shadow:0 0 0 .5px rgba(245,106,217,.55)"></div>
<div class="a" style="left:215px;top:26px;width:11px;height:11px;background:#e3ecfb;border:1px solid #e9eef8;border-right-color:#9c9fa6;border-bottom-color:#9c9fa6;box-shadow:1px 1px 0 #b8bcc4"></div>
<div class="t" id="f_projp" style="left:230.500px;top:24.500px;letter-spacing:.15px">Projet principal</div>
<div class="a" style="left:212px;top:22px;width:6px;height:6px;background:#fff;border:1px solid #000"></div>
<div class="a" style="left:317px;top:22px;width:6px;height:6px;background:#fff;border:1px solid #000"></div>
<div class="a" style="left:212px;top:37px;width:6px;height:6px;background:#fff;border:1px solid #000"></div>
<div class="a" style="left:317px;top:37px;width:6px;height:6px;background:#fff;border:1px solid #000"></div>
<div class="lb" style="left:31px;top:48px;width:112px;height:21px;padding-top:4px;letter-spacing:.04px">N° de pr./N° de Cons.</div>
<div class="lb" style="left:31px;top:75px;width:71px;height:21px;padding-top:4px">Attribution:</div>
<div class="lb" style="left:31px;top:101px;width:80px;height:21px;padding-top:4px">Consignation:</div>
<div class="lb" style="left:31px;top:129px;width:43px;height:21px;padding-top:4px">Lot:</div>
<div class="lb" style="left:31px;top:155px;width:84px;height:21px;padding-top:4px">Type de projet:</div>
<div class="lb" style="left:31px;top:181px;width:74px;height:21px;padding-top:4px">Dénomination</div>
<div class="lb" style="left:30px;top:207px;width:95px;height:21px;padding-top:4px">Date de livraison:</div>
<div class="fd lav" style="left:142px;top:48px;width:187px;height:20px;padding:3px 0 0 5px">Numéro de projet</div>
<div class="fd nb" style="left:142px;top:75px;width:187px;height:20px;padding:3px 0 0 5px"></div>
<div class="a" style="left:281px;top:78px;width:16px;height:16px;border:1px solid #555;border-radius:2.500px;background:#fff"></div><div class="a" style="left:284px;top:89px;width:2px;height:2px;background:#4a4a4a;box-shadow:4px 0 #4a4a4a,8px 0 #4a4a4a"></div>
<svg style="left:309px;top:78px" width="12" height="16" viewBox="0 0 12 16">
<path d="M0 1.200L3.600 .300V15.700L0 13.200Z" fill="#1565d8"/><path d="M3.600 .300H11V13.800L7 15.700H3.600Z" fill="#2f86ee"/>
<rect x="4.300" y="2.300" width="6" height="4.800" fill="#e4eefb"/><rect x="4.300" y="8" width="6" height="5.200" fill="#e4eefb"/>
<rect x="5.800" y="3.800" width="3" height="1.300" fill="#e8a23c"/><rect x="5.800" y="9.800" width="3" height="1.300" fill="#e8a23c"/></svg>
<div class="fd " style="left:142px;top:103px;width:187px;height:20px;padding:3px 0 0 5px"></div><div class="dd" style="left:314px;top:110px"></div>
<div class="fd " style="left:142px;top:129px;width:187px;height:20px;padding:3px 0 0 5px"></div><div class="dd" style="left:314px;top:136px"></div>
<div class="fd " style="left:142px;top:155px;width:187px;height:20px;padding:2px 0 0 6px">Type de projet</div><div class="dd" style="left:314px;top:162px"></div>
<div class="fd " style="left:142px;top:181px;width:187px;height:20px;padding:3px 0 0 5px">Dénomination</div>
<div class="fd " style="left:140px;top:208px;width:190px;height:20px;padding:3px 0 0 6px">Date de livraison</div>
<div class="gb" style="left:22px;top:257px;width:319px;height:216px"></div><div class="gt" style="left:28px;top:249px">Matériau/Surfaces</div>
<div class="lb" style="left:31px;top:269px;width:77px;height:21px;padding-top:4px">Surf. acier:</div>
<div class="lb" style="left:31px;top:295px;width:68px;height:23px;padding-top:4px">Surf. alu:</div>
<div class="lb" style="left:31px;top:321px;width:89px;height:21px;padding-top:4px">Surf. acier fin:</div>
<div class="lb" style="left:32px;top:391px;width:110px;height:21px;padding-top:4px">Acier mat:</div>
<div class="lb" style="left:32px;top:417px;width:110px;height:21px;padding-top:4px">Alu mat:</div>
<div class="lb" style="left:32px;top:443px;width:110px;height:21px;padding-top:4px">Acier fin mat:</div>
<div class="fd " style="left:142px;top:269px;width:187px;height:20px;padding:3px 0 0 5px"></div><div class="dd" style="left:314px;top:276px"></div>
<div class="fd " style="left:142px;top:295px;width:187px;height:20px;padding:3px 0 0 5px"></div><div class="dd" style="left:314px;top:302px"></div>
<div class="fd " style="left:142px;top:321px;width:187px;height:20px;padding:3px 0 0 5px"></div><div class="dd" style="left:314px;top:328px"></div>
<div class="fd " style="left:143px;top:391px;width:187px;height:20px;padding:3px 0 0 5px"></div><div class="dd" style="left:315px;top:398px"></div>
<div class="fd " style="left:143px;top:417px;width:187px;height:20px;padding:3px 0 0 5px"></div><div class="dd" style="left:315px;top:424px"></div>
<div class="fd " style="left:143px;top:443px;width:187px;height:20px;padding:3px 0 0 5px"></div><div class="dd" style="left:315px;top:450px"></div>
<div class="gb" style="left:360px;top:30px;width:345px;height:196px"></div><div class="gt" style="letter-spacing:-.110px;left:366px;top:22px">Attributs additionnels pour classe</div>
<div class="lb" style="left:368px;top:62px;width:72px;height:21px;padding-top:4px">Tolérances:</div>
<div class="lb" style="left:368px;top:89px;width:93px;height:21px;padding-top:4px">Gr d'évaluation:</div>
<div class="lb" style="left:368px;top:115px;width:102px;height:21px;padding-top:4px">Mat. d'apport 1:</div>
<div class="lb" style="left:368px;top:143px;width:98px;height:23px;padding-top:4px">Soudage 1:</div>
<div class="lb" style="left:368px;top:169px;width:102px;height:21px;padding-top:4px">Mat. d'apport 2:</div>
<div class="lb" style="left:368px;top:195px;width:98px;height:21px;padding-top:4px">Soudage 2:</div>
<div class="fd " style="left:473px;top:62px;width:187px;height:20px;padding:3px 0 0 5px"></div><div class="dd" style="left:645px;top:69px"></div>
<div class="fd " style="left:473px;top:89px;width:187px;height:20px;padding:3px 0 0 5px"></div><div class="dd" style="left:645px;top:96px"></div>
<div class="fd " style="left:473px;top:115px;width:187px;height:20px;padding:3px 0 0 5px"></div><div class="dd" style="left:645px;top:122px"></div>
<div class="fd " style="left:473px;top:143px;width:187px;height:20px;padding:3px 0 0 5px"></div><div class="dd" style="left:645px;top:150px"></div>
<div class="fd " style="left:473px;top:169px;width:187px;height:20px;padding:3px 0 0 5px"></div><div class="dd" style="left:645px;top:176px"></div>
<div class="fd " style="left:473px;top:195px;width:187px;height:20px;padding:3px 0 0 5px"></div><div class="dd" style="left:645px;top:202px"></div>
<div class="gb" style="left:360px;top:273px;width:345px;height:97px"></div><div class="gt" style="left:366px;top:265px">Client</div>
<div class="lb" style="left:368px;top:285px;width:41px;height:21px;padding-top:4px">Nom:</div>
<div class="lb" style="left:368px;top:311px;width:53px;height:21px;padding-top:4px">Rue:</div>
<div class="lb" style="left:368px;top:337px;width:71px;height:21px;padding-top:4px">CP/Ville:</div>
<div class="fd " style="left:473px;top:285px;width:187px;height:20px;padding:3px 0 0 5px">Nom de client (Kunde)</div>
<div class="fd " style="left:473px;top:311px;width:187px;height:20px;padding:3px 0 0 5px">Rue (Kunde)</div>
<div class="fd " style="left:473px;top:337px;width:45px;height:20px;padding:3px 0 0 5px"><div style="width:37.500px;overflow:hidden">Code postal</div></div>
<div class="fd " style="left:521px;top:337px;width:139px;height:20px;padding:3px 0 0 5px">Ville (Kunde)</div>
<div class="gb" style="left:360px;top:381px;width:345px;height:92px"></div><div class="gt" style="left:366px;top:373px">Constructeur:</div>
<div class="lb" style="left:369px;top:391px;width:41px;height:21px;padding-top:4px">Nom:</div>
<div class="lb" style="left:369px;top:417px;width:53px;height:21px;padding-top:4px">Rue:</div>
<div class="lb" style="left:369px;top:443px;width:75px;height:21px;padding-top:4px">CP/Ville:</div>
<div class="fd " style="left:474px;top:391px;width:187px;height:20px;padding:3px 0 0 5px">Nom de client (Kunde)</div>
<div class="fd " style="left:474px;top:417px;width:187px;height:20px;padding:3px 0 0 5px">Rue (Kunde)</div>
<div class="fd " style="left:474px;top:443px;width:45px;height:20px;padding:3px 0 0 5px"><div style="width:37.500px;overflow:hidden">Code postal</div></div>
<div class="fd " style="left:522px;top:443px;width:139px;height:20px;padding:3px 0 0 5px">Ville (Kunde)</div>
</div>
</div>
<!-- scrollbar -->
<div class="a" style="left:31px;top:739px;width:599px;height:16px;background:#f3f3f3"></div>
<svg style="left:37px;top:743px" width="4" height="8" viewBox="0 0 4 8"><path d="M4 0V8L0 4Z" fill="#9a9a9a"/></svg>
<svg style="left:620px;top:743px" width="4" height="8" viewBox="0 0 4 8"><path d="M0 0V8L4 4Z" fill="#b5b5b5"/></svg>
<div class="a" style="left:47px;top:744px;width:263px;height:6px;border-radius:3px;background:#a6a6a6"></div>
<div id="pp"></div><div id="pph"></div><div id="pps"></div>
<div class="t" id="p_title" style="left:644px;top:177px">Propriétés</div>
<svg style="left:987px;top:181px" width="8" height="4" viewBox="0 0 8 4"><path d="M0 0H8L4 4Z" fill="#4a4f58"/></svg>
<svg style="left:1002px;top:179px" width="7" height="10" viewBox="0 0 7 10"><path d="M1.500 .500H5.500M2 .500V5.500M5 .500V5.500M0 5.500H7M3.500 5.500V10" stroke="#333" stroke-width="1" fill="none"/><path d="M4 1V5.500H5V1Z" fill="#333"/></svg>
<div class="t" id="p_sub" style="letter-spacing:-0.1px;left:727.500px;width:200px;text-align:center;top:194px">Boîte de contrôle</div>
<div class="card" style="top:217px;height:62px"></div><div class="a" style="left:648px;top:229px;width:6px;height:1px;background:#111"></div><div class="ct" id="c_pos" style="letter-spacing:-0.7px;top:221.5px">Position</div><div class="cl" style="left:706.8px;top:229px;width:274.20000000000005px"></div><svg style="left:980px;top:220px" width="18" height="18" viewBox="0 0 18 18"><circle cx="9" cy="9" r="7.800" fill="#fff" stroke="#111" stroke-width="1.150"/><path d="M5.500 11L9 7.500L12.500 11" stroke="#111" stroke-width="1.900" fill="none"/></svg>
<div class="pf" style="left:652px;top:241px;width:50px;height:29px;"></div>
<div class="sl" style="left:657px;top:241.500px;">X</div>
<div class="pv" style="left:657px;top:253.500px">213</div>
<div class="pf" style="left:706px;top:241px;width:50px;height:29px;"></div>
<div class="sl" style="left:711px;top:241.500px;">Y</div>
<div class="pv" style="left:711px;top:253.500px">31</div>
<div class="pf" style="left:764px;top:241px;width:50px;height:29px;border-bottom:2px solid #2b8cff;"></div>
<div class="sl" style="left:769px;top:241.500px;color:#3a8ee6;">Largeur</div>
<div class="pv" style="left:769px;top:253.500px">110</div>
<div class="pf" style="left:818px;top:241px;width:50px;height:29px;"></div>
<div class="sl" style="left:823px;top:241.500px;">Hauteur</div>
<div class="pv" style="left:823px;top:253.500px">20</div>
<div class="cb" style="left:876px;top:248px"><svg width="13" height="13" viewBox="0 0 13 13" style="left:0;top:0"><path d="M2.800 6.800L5.300 9.300L10.200 3.800" stroke="#fff" stroke-width="1.800" fill="none"/></svg></div>
<div class="t" id="p_indice" style="letter-spacing:0px;left:893px;top:247.500px">Indice de tabulation</div>
<div class="card" style="top:288px;height:83px"></div><div class="a" style="left:648px;top:300px;width:6px;height:1px;background:#111"></div><div class="ct" id="c_coul" style="letter-spacing:-0.75px;top:292.5px">Couleurs</div><div class="cl" style="left:711px;top:300px;width:270px"></div><svg style="left:980px;top:291px" width="18" height="18" viewBox="0 0 18 18"><circle cx="9" cy="9" r="7.800" fill="#fff" stroke="#111" stroke-width="1.150"/><path d="M5.500 11L9 7.500L12.500 11" stroke="#111" stroke-width="1.900" fill="none"/></svg>
<div class="t" id="p_ctexte" style="letter-spacing:-0.1px;left:652px;top:317px">Couleur de texte:</div>
<div class="a" style="left:746.500px;top:313px;width:21px;height:20px;border-radius:3px;background:#000"></div>
<div class="t" id="p_cfond" style="letter-spacing:-0.02px;left:652px;top:344px">Couleur de fond:</div>
<div class="a" style="left:746px;top:340px;width:22px;height:22px;border-radius:3px;background:#fff;border:1px solid #a9a9a9"></div>
<div class="t" id="p_transp" style="letter-spacing:-0.47px;left:776.500px;top:343px">Transparence:</div>
<div class="pf" style="left:852px;top:338px;width:75px;height:24px"></div>
<div class="pv" id="p_100" style="left:857px;top:342.500px">100%</div>
<svg style="left:905px;top:340px" width="17" height="16" viewBox="0 0 17 16">
<path d="M1 15L2.200 11.200L11.500 1.800L14 4.200L4.800 13.600Z" fill="#f2cd6e" stroke="#b88a2e" stroke-width=".7"/><path d="M1 15L2.200 11.200L4.800 13.600Z" fill="#e8d9b8" stroke="#8a7a55" stroke-width=".5"/>
<path d="M11.500 1.800L12.600 .800L15 3.200L14 4.200Z" fill="#e06a5a"/><path d="M10.700 2.600L11.500 1.800L14 4.200L13.200 5Z" fill="#8fbf7a"/></svg>
<div class="card" style="top:381px;height:102px"></div><div class="a" style="left:648px;top:393px;width:6px;height:1px;background:#111"></div><div class="ct" id="c_form" style="top:385.5px">Formatage</div><div class="cl" style="left:722.5px;top:393px;width:258.5px"></div><svg style="left:980px;top:384px" width="18" height="18" viewBox="0 0 18 18"><circle cx="9" cy="9" r="7.800" fill="#fff" stroke="#111" stroke-width="1.150"/><path d="M5.500 11L9 7.500L12.500 11" stroke="#111" stroke-width="1.900" fill="none"/></svg>
<div class="cb" style="left:652px;top:406px"><svg width="13" height="13" viewBox="0 0 13 13" style="left:0;top:0"><path d="M2.800 6.800L5.300 9.300L10.200 3.800" stroke="#fff" stroke-width="1.800" fill="none"/></svg></div>
<div class="t" id="p_util" style="letter-spacing:-0.06px;left:669.500px;top:405.500px">Utiliser le formatage par défaut</div>
<div class="pf" style="left:652px;top:427px;width:200px;height:22px;border-bottom:1px dotted #555"></div>
<div class="pv" id="p_font" style="letter-spacing:-0.19px;left:658px;top:430.500px;color:#111">Microsoft Sans Serif</div>
<svg style="left:838px;top:435px" width="8" height="4" viewBox="0 0 8 4"><path d="M0 0H8L4 4Z" fill="#777"/></svg>
<div class="pf" style="left:856px;top:427px;width:60px;height:22px;border-bottom:1px dotted #555"></div>
<div class="pv" style="left:862px;top:431px;color:#111">12</div>
<svg style="left:902px;top:435px" width="8" height="4" viewBox="0 0 8 4"><path d="M0 0H8L4 4Z" fill="#777"/></svg>
<div class="fb" style="left:652px"><svg width="20" height="20" viewBox="0 0 20 20" style="left:-1px;top:-1px"><text x="10" y="16.200" text-anchor="middle" font-family="Liberation Sans,sans-serif" font-size="17" fill="#6a6a6a">B</text></svg></div>
<div class="fb" style="left:676px"><svg width="20" height="20" viewBox="0 0 20 20" style="left:-1px;top:-1px"><text x="9.500" y="16" text-anchor="middle" font-family="Liberation Serif,serif" font-style="italic" font-size="18" fill="#555">I</text></svg></div>
<div class="fb" style="left:700px"><svg width="20" height="20" viewBox="0 0 20 20" style="left:-1px;top:-1px"><text x="10" y="13.500" text-anchor="middle" font-family="Liberation Sans,sans-serif" font-size="14.500" fill="#666">U</text><path d="M4.500 16.500H15.500" stroke="#666" stroke-width="1.200"/></svg></div>
<div class="fb" style="left:724px"><svg width="20" height="20" viewBox="0 0 20 20" style="left:-1px;top:-1px"><text x="10" y="16" text-anchor="middle" font-family="Liberation Sans,sans-serif" font-size="16.500" fill="#666">T</text><path d="M4.500 10H15.500" stroke="#666" stroke-width="1.300"/></svg></div>
<div class="card" style="top:492px;height:108px"></div><div class="a" style="left:648px;top:504px;width:6px;height:1px;background:#111"></div><div class="ct" id="c_anno" style="letter-spacing:-0.42px;top:496.5px">Annotation</div><div class="cl" style="left:724.8px;top:504px;width:256.20000000000005px"></div><svg style="left:980px;top:495px" width="18" height="18" viewBox="0 0 18 18"><circle cx="9" cy="9" r="7.800" fill="#fff" stroke="#111" stroke-width="1.150"/><path d="M5.500 11L9 7.500L12.500 11" stroke="#111" stroke-width="1.900" fill="none"/></svg>
<div class="t" id="p_mode" style="letter-spacing:0.09px;left:652px;top:516.500px">Mode texte: Unilingue</div>
<div class="pf" style="left:652px;top:535px;width:347px;height:29px"></div>
<div class="sl" id="p_taff" style="letter-spacing:-0.15px;left:657px;top:535.500px">Texte affiché</div>
<div class="pv" id="p_pp" style="letter-spacing:0px;left:657px;top:547.500px">Projet principal</div>
<div class="a" style="left:652px;top:572px;width:104px;height:19px;border:1px solid #8a8a8a;border-radius:3px;background:#fff"></div>
<div class="t" id="p_multi" style="letter-spacing:0.14px;left:654px;top:575px;color:#2b8cff">Utiliser multilingue</div>
<div class="card" style="top:609px;height:144px"></div><div class="a" style="left:648px;top:621px;width:6px;height:1px;background:#111"></div><div class="ct" id="c_spec" style="letter-spacing:-0.42px;top:613.5px">Spécifiques à l’élément</div><div class="cl" style="left:791.6px;top:621px;width:189.39999999999998px"></div><svg style="left:980px;top:612px" width="18" height="18" viewBox="0 0 18 18"><circle cx="9" cy="9" r="7.800" fill="#fff" stroke="#111" stroke-width="1.150"/><path d="M5.500 11L9 7.500L12.500 11" stroke="#111" stroke-width="1.900" fill="none"/></svg>
<div class="pf dis" style="left:652px;top:633px;width:347px;height:29px"></div>
<div class="sl" id="p_denom" style="letter-spacing:0.08px;left:657px;top:633.500px">Dénomination de l’attribut</div>
<div class="pf dis" style="left:652px;top:667px;width:347px;height:29px"></div>
<div class="sl" id="p_nomattr" style="letter-spacing:0.14px;left:657px;top:667.500px">Nom d’attribut</div>
<div class="pv" id="p_root" style="font-size:11.500px;letter-spacing:-0.85px;left:657px;top:679.500px">ROOTPROJECT</div>
<div class="t" id="p_valeur" style="left:652px;top:705px">Valeur prédéfinie:</div>
<div class="rd" style="left:752px;top:705px;border-color:#2b8cff;border-width:1.500px"><div class="a" style="left:2.500px;top:2.500px;width:5px;height:5px;border-radius:50%;background:#2b8cff"></div></div>
<div class="t" id="p_aucun" style="left:769px;top:705px">Aucun</div>
<div class="rd" style="left:812px;top:705px"></div>
<div class="t" id="p_vrai" style="left:829px;top:705px">vrai</div>
<div class="rd" style="left:856px;top:705px"></div>
<div class="t" id="p_faux" style="letter-spacing:-0.6px;left:873.500px;top:705px">Faux</div>
<div class="a" style="left:752px;top:728px;width:13px;height:13px;border:1.500px solid #555;border-radius:2px;background:#fff"></div>
<div class="t" id="p_mls" style="letter-spacing:-0.07px;left:769px;top:727.500px">Mode lecture seule</div>
<div id="frame"></div>
</div>
</body>
</html>
